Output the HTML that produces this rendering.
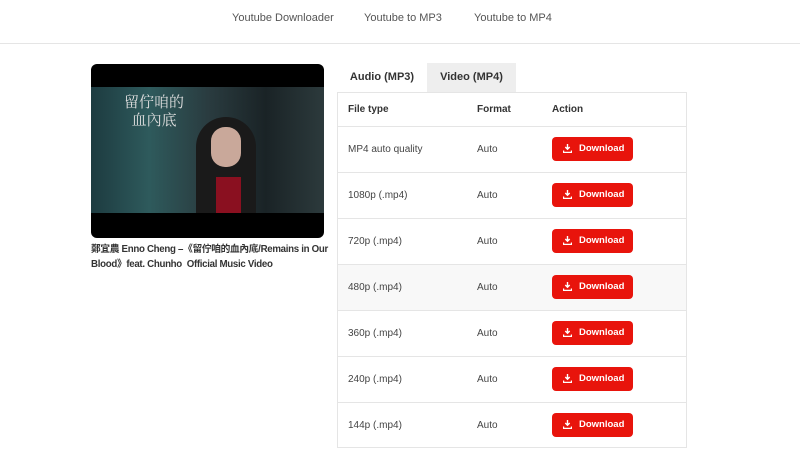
<!DOCTYPE html>
<html><head><meta charset="utf-8"><style>
*{margin:0;padding:0;box-sizing:border-box}
body{width:800px;height:458px;background:#fff;font-family:"Liberation Sans","Noto Sans CJK TC",sans-serif;color:#333;position:relative;overflow:hidden}
.nav{position:absolute;top:0;left:0;width:800px;height:44px;border-bottom:1px solid #e5e5e5}
.nav span{position:absolute;top:12px;font-size:11px;color:#555}
.vid{position:absolute;left:91px;top:64px;width:233px;height:174px;background:#000;border-radius:6px;overflow:hidden}
.scene{position:absolute;left:0;top:23px;width:233px;height:126px;background:linear-gradient(90deg,#1d3b40 0%,#2e5a5c 25%,#2a3c40 50%,#1a2326 75%,#2c3a3c 100%)}
.cap{position:absolute;left:91px;top:242px;font-size:9.7px;font-weight:bold;line-height:15px;color:#333;white-space:nowrap;letter-spacing:-0.3px}
.tab{position:absolute;top:63px;height:29px;font-size:11px;font-weight:bold;color:#333;text-align:center;line-height:29px}
.tbl{position:absolute;left:337px;top:92px;width:350px;height:356px;border:1px solid #e5e5e5}
.row{position:absolute;left:0;width:348px;border-top:1px solid #e5e5e5;font-size:10px;color:#444}
.row span{position:absolute}
.btn{position:absolute;left:214px;width:81px;height:24px;background:#e8140c;border-radius:4px;color:#fff;font-weight:bold;font-size:9.5px;line-height:24px;padding-left:27px}
.btn svg{position:absolute;left:11px;top:7px}
</style></head><body>
<div class="nav"><span style="left:232px">Youtube Downloader</span><span style="left:364px">Youtube to MP3</span><span style="left:474px">Youtube to MP4</span></div>
<div class="vid"><div class="scene">
<div style="position:absolute;left:105px;top:30px;width:60px;height:96px;background:#1a1a1a;border-radius:30px 30px 0 0"></div>
<div style="position:absolute;left:125px;top:90px;width:25px;height:36px;background:#8a1020"></div>
<div style="position:absolute;left:120px;top:40px;width:30px;height:40px;background:#c9a89a;border-radius:14px"></div>
<div style="position:absolute;left:33px;top:6px;color:#ddd;font-family:'Noto Serif CJK SC',serif;font-size:15px;line-height:18px">留佇咱的<br>&nbsp;&nbsp;血內底</div>
</div></div>
<div class="cap">鄭宜農 Enno Cheng –《留佇咱的血內底/Remains in Our<br>Blood》feat. Chunho&nbsp; Official Music Video</div>
<div class="tab" style="left:340px;width:84px">Audio (MP3)</div>
<div class="tab" style="left:427px;width:89px;background:#eeeeee">Video (MP4)</div>
<div class="tbl">
<div class="row" style="top:0;height:34px;border-top:none;font-weight:bold;color:#333"><span style="left:10px;top:11px">File type</span><span style="left:139px;top:11px">Format</span><span style="left:214px;top:11px">Action</span></div>
<div class="row" style="top:33px;height:46px"><span style="left:10px;top:17px">MP4 auto quality</span><span style="left:139px;top:17px">Auto</span><div class="btn" style="top:10px"><svg width="9" height="9" viewBox="0 0 9 9"><path d="M4.5 0v5M2.3 3l2.2 2.2L6.7 3M0.5 6.5v2h8v-2" stroke="#fff" stroke-width="1.4" fill="none"/></svg>Download</div></div>
<div class="row" style="top:79px;height:46px"><span style="left:10px;top:17px">1080p (.mp4)</span><span style="left:139px;top:17px">Auto</span><div class="btn" style="top:10px"><svg width="9" height="9" viewBox="0 0 9 9"><path d="M4.5 0v5M2.3 3l2.2 2.2L6.7 3M0.5 6.5v2h8v-2" stroke="#fff" stroke-width="1.4" fill="none"/></svg>Download</div></div>
<div class="row" style="top:125px;height:46px"><span style="left:10px;top:17px">720p (.mp4)</span><span style="left:139px;top:17px">Auto</span><div class="btn" style="top:10px"><svg width="9" height="9" viewBox="0 0 9 9"><path d="M4.5 0v5M2.3 3l2.2 2.2L6.7 3M0.5 6.5v2h8v-2" stroke="#fff" stroke-width="1.4" fill="none"/></svg>Download</div></div>
<div class="row" style="top:171px;height:46px;background:#f8f8f8"><span style="left:10px;top:17px">480p (.mp4)</span><span style="left:139px;top:17px">Auto</span><div class="btn" style="top:10px"><svg width="9" height="9" viewBox="0 0 9 9"><path d="M4.5 0v5M2.3 3l2.2 2.2L6.7 3M0.5 6.5v2h8v-2" stroke="#fff" stroke-width="1.4" fill="none"/></svg>Download</div></div>
<div class="row" style="top:217px;height:46px"><span style="left:10px;top:17px">360p (.mp4)</span><span style="left:139px;top:17px">Auto</span><div class="btn" style="top:10px"><svg width="9" height="9" viewBox="0 0 9 9"><path d="M4.5 0v5M2.3 3l2.2 2.2L6.7 3M0.5 6.5v2h8v-2" stroke="#fff" stroke-width="1.4" fill="none"/></svg>Download</div></div>
<div class="row" style="top:263px;height:46px"><span style="left:10px;top:17px">240p (.mp4)</span><span style="left:139px;top:17px">Auto</span><div class="btn" style="top:10px"><svg width="9" height="9" viewBox="0 0 9 9"><path d="M4.5 0v5M2.3 3l2.2 2.2L6.7 3M0.5 6.5v2h8v-2" stroke="#fff" stroke-width="1.4" fill="none"/></svg>Download</div></div>
<div class="row" style="top:309px;height:46px"><span style="left:10px;top:17px">144p (.mp4)</span><span style="left:139px;top:17px">Auto</span><div class="btn" style="top:10px"><svg width="9" height="9" viewBox="0 0 9 9"><path d="M4.5 0v5M2.3 3l2.2 2.2L6.7 3M0.5 6.5v2h8v-2" stroke="#fff" stroke-width="1.4" fill="none"/></svg>Download</div></div>
</div>
</body></html>
